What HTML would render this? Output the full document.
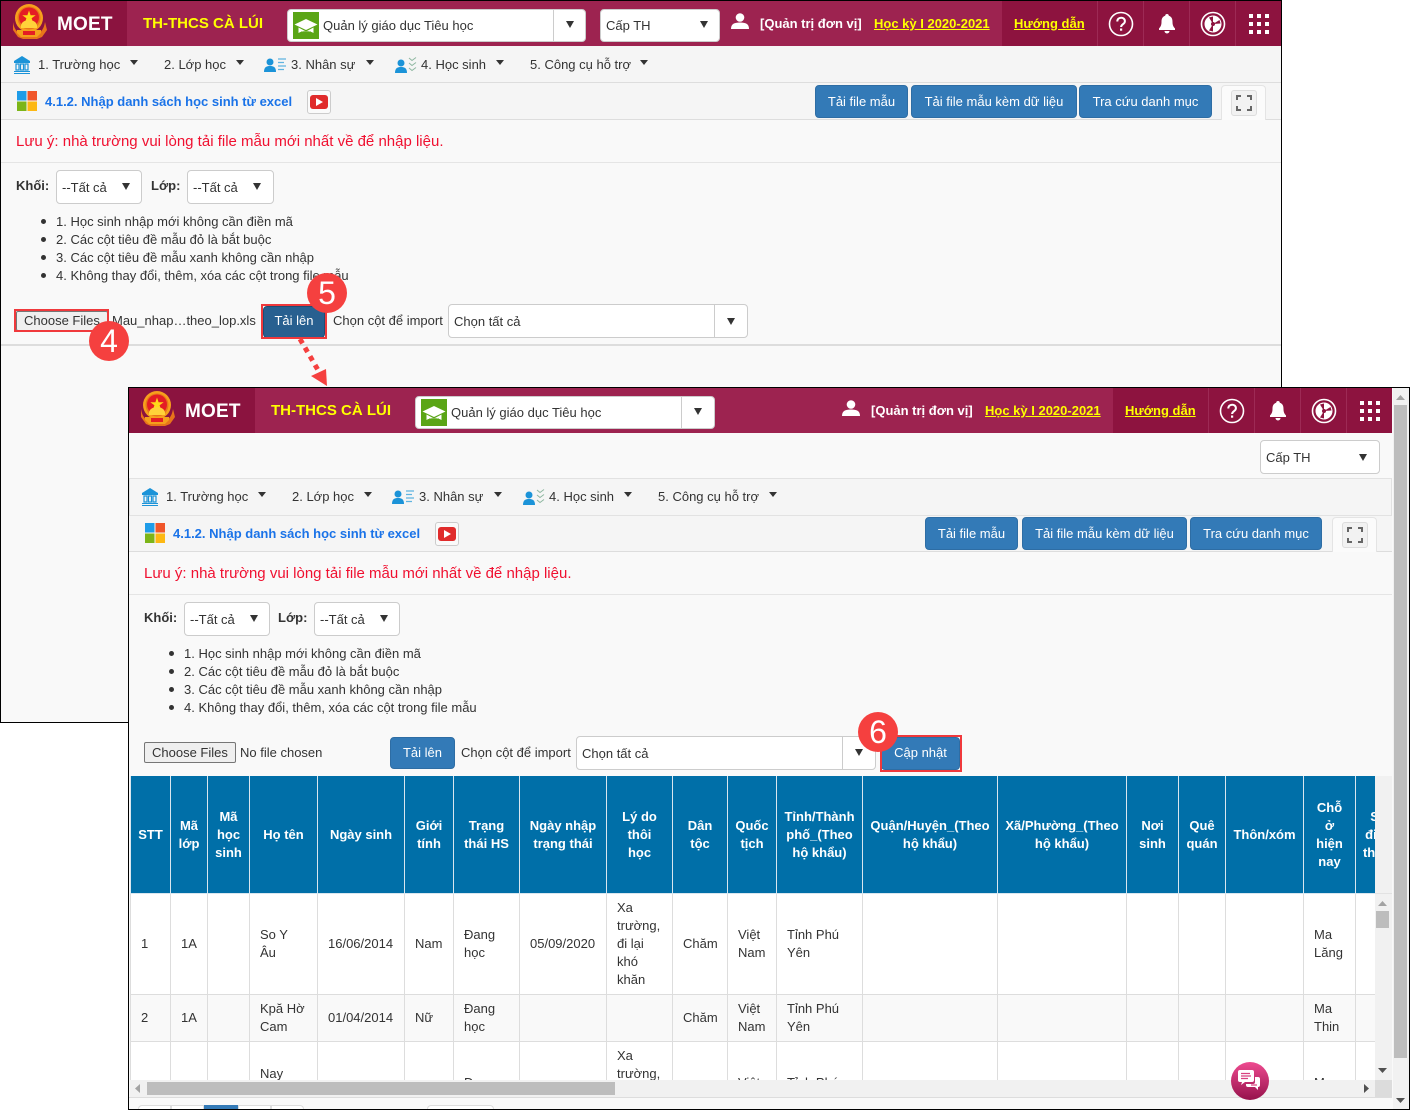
<!DOCTYPE html>
<html lang="vi"><head><meta charset="utf-8"><title>MOET</title>
<style>
html,body{margin:0;padding:0;background:#fff;overflow:hidden;width:1410px;height:1110px}
#r{width:1410px;height:1110px;position:relative;overflow:hidden;font:13px/18px "Liberation Sans",sans-serif;color:#333}
.a,.t,.sel,.btn,.car{position:absolute;box-sizing:border-box}
.t{white-space:nowrap;margin-top:1px}
.sel{background:#fff;border:1px solid #ccc;border-radius:4px}
.btn{background:#337ab7;color:#fff;border-radius:4px;text-align:center;white-space:nowrap;border:1px solid #2e6da4}
.car{width:0;height:0;border-left:4px solid transparent;border-right:4px solid transparent;border-top:5px solid #333}
.arr{border-left-width:4px;border-right-width:4px;border-top:7px solid #333}
.y{color:#ff0;font-weight:bold;text-decoration:underline}
.w{color:#fff;font-weight:bold}
.blue{color:#1a73e8;font-weight:bold}
.red{color:#f01030;font-size:15px}
.b{font-weight:bold}
.num{position:absolute;width:40px;height:40px;border-radius:50%;background:#f5403f;color:#fff;font-size:32px;line-height:40px;text-align:center}
table{border-collapse:collapse;table-layout:fixed;position:absolute;left:0;top:0}
th{background:#006fa8;color:#fff;font-size:13px;line-height:18px;border:1px solid #d8e6ef;border-top:0;padding:0;text-align:center;vertical-align:middle;white-space:nowrap;overflow:hidden;height:117px}
td{border:1px solid #ddd;padding:0 0 0 10px;line-height:18px;vertical-align:middle;white-space:nowrap;overflow:hidden;color:#333;font-size:13px}
tr.z td{background:#f9f9f9}
svg{position:absolute;overflow:visible}
</style></head><body><div id="r">
<svg width="0" height="0" style="position:absolute">
<defs>
<symbol id="em" viewBox="0 0 36 36">
<circle cx="18" cy="14" r="14" fill="#f7a01c"/><circle cx="18" cy="14" r="11.500" fill="#e8751a"/><circle cx="18" cy="13.500" r="10" fill="#e41d24"/>
<polygon points="18,6.500 19.600,11.300 24.700,11.300 20.600,14.300 22.200,19.200 18,16.200 13.800,19.200 15.400,14.300 11.300,11.300 16.400,11.300" fill="#ffd91a"/>
<path d="M10 22a8 6 0 0 1 16 0v2H10z" fill="#ffd23a"/>
<path d="M2 18c1 6 3 9 6 11h20c3-2 5-5 6-11l2 8-5 7-5 2H12l-5-2-5-7z" fill="#e8751a"/>
<path d="M6 26h24v3l-4 4H10l-4-4z" fill="#f4a01c"/><rect x="12" y="27" width="12" height="4" fill="#e41d24"/>
</symbol>
<symbol id="gr" viewBox="0 0 26 27"><rect width="26" height="27" fill="#5aa516"/><path d="M13 7L1.500 12.500 13 18l11.500-5.500z" fill="#fff"/><path d="M5.500 15.500v5.500c4-2.500 11-2.500 15 0v-5.500L13 19.500z" fill="#fff"/><path d="M8 19.500h10v1.500H8z" fill="#5aa516"/></symbol>
<symbol id="bank" viewBox="0 0 16 18"><path d="M8 0L0 5v2h16V5z" fill="#1b93d8"/><path d="M2 8h3v6H2zM6.500 8h3v6h-3zM11 8h3v6h-3z" fill="none" stroke="#1b93d8" stroke-width="1.200"/><path d="M0 15h16v1H0zM0 17h16v1H0z" fill="#1b93d8"/></symbol>
<symbol id="pl" viewBox="0 0 22 14"><circle cx="6" cy="4" r="3.500" fill="#1b93d8"/><path d="M0 14c0-5 2.500-6 6-6s6 1 6 6z" fill="#1b93d8"/><path d="M14 1h8M14 4.500h6M14 8h8M14 11.500h6" stroke="#5fb4e0" stroke-width="1.200"/></symbol>
<symbol id="pc" viewBox="0 0 22 16"><circle cx="6" cy="6" r="3.500" fill="#1b93d8"/><path d="M0 16c0-5 2.500-6 6-6s6 1 6 6z" fill="#1b93d8"/><path d="M14 1l3 2.500 4-3M14 6l3 2.500 4-3M14 11l3 2.500 4-3" fill="none" stroke="#8db7a0" stroke-width="1"/></symbol>
<symbol id="qm" viewBox="0 0 26 26"><circle cx="13" cy="13" r="11.500" fill="none" stroke="#fff" stroke-width="1.600"/><path d="M9.300 10.500c0-5 7.600-5 7.600-.300 0 3-3.800 3-3.800 5.800" fill="none" stroke="#fff" stroke-width="2"/><rect x="12" y="17.500" width="2.200" height="2.200" fill="#fff"/></symbol>
<symbol id="bell" viewBox="0 0 20 20"><path d="M10 0a1.800 1.800 0 0 1 1.800 1.800c3 .9 3.700 3.400 3.700 6.200 0 3.500 1.200 5 2.500 6.500V16H2v-1.500C3.300 13 4.500 11.500 4.500 8c0-2.800.7-5.300 3.700-6.200A1.800 1.800 0 0 1 10 0zM7.500 17h5a2.500 2.500 0 0 1-5 0z" fill="#fff"/></symbol>
<symbol id="whl" viewBox="0 0 26 26"><circle cx="13" cy="13" r="11.500" fill="none" stroke="#fff" stroke-width="1.600"/><circle cx="13" cy="13" r="8.500" fill="#fff"/><path d="M13 13V5.500L9 6.500zM13 13l7.500-.5-1-3.500zM13 13l-4 6.500 4 1z" fill="#8d133f"/><circle cx="13" cy="13" r="2" fill="#8d133f"/></symbol>
<symbol id="gd" viewBox="0 0 20 20"><path d="M0 0h4v4H0zM8 0h4v4H8zM16 0h4v4h-4zM0 8h4v4H0zM8 8h4v4H8zM16 8h4v4h-4zM0 16h4v4H0zM8 16h4v4H8zM16 16h4v4h-4z" fill="#fff"/></symbol>
<symbol id="usr" viewBox="0 0 18 16"><circle cx="9" cy="4.500" r="4.300" fill="#fff"/><path d="M0 16c0-5 3-6.500 9-6.500s9 1.500 9 6.500z" fill="#fff"/></symbol>
<symbol id="win" viewBox="0 0 20 20"><rect width="9.500" height="9.500" fill="#1e9ce8"/><rect x="10.500" width="9.500" height="9.500" fill="#f0562a"/><rect y="10.500" width="9.500" height="9.500" fill="#7cb518"/><rect x="10.500" y="10.500" width="9.500" height="9.500" fill="#fdb813"/></symbol>
<symbol id="fs" viewBox="0 0 16 16"><path d="M1 5V1h4M11 1h4v4M15 11v4h-4M5 15H1v-4" fill="none" stroke="#666" stroke-width="2"/></symbol>
</defs></svg>

<!-- WINDOW 1 -->
<div class="a" style="left:0;top:0;width:1282px;height:723px;background:#f9f9f9;border:1px solid #000"></div>
<div class="a" style="left:1px;top:1px;width:1280px;height:45px;background:#9d2350"></div>
<div class="a" style="left:1px;top:1px;width:126px;height:45px;background:#8b133f"></div>
<div class="a" style="left:1002px;top:1px;width:279px;height:45px;background:#8d133f"></div>
<div class="a" style="left:1097px;top:1px;width:1px;height:45px;background:#9d2a55"></div><div class="a" style="left:1143px;top:1px;width:1px;height:45px;background:#9d2a55"></div><div class="a" style="left:1189px;top:1px;width:1px;height:45px;background:#9d2a55"></div><div class="a" style="left:1235px;top:1px;width:1px;height:45px;background:#9d2a55"></div>
<svg style="left:11px;top:4px" width="36" height="36"><use href="#em"/></svg>
<div class="t w" style="left:57px;top:13px;font-size:19px;line-height:22px;letter-spacing:.2px">MOET</div>
<div class="t b" style="left:143px;top:14px;font-size:15px;color:#ff0">TH-THCS CÀ LÚI</div>
<div class="sel" style="left:287px;top:9px;width:299px;height:33px"></div><div class="a" style="left:553px;top:9px;width:1px;height:33px;background:#ccc"></div>
<svg style="left:293px;top:12px" width="26" height="27"><use href="#gr"/></svg>
<div class="t" style="left:323px;top:16px">Quản lý giáo dục Tiêu học</div><div class="car arr" style="left:566px;top:21px"></div>
<div class="sel" style="left:600px;top:9px;width:120px;height:33px"></div><div class="t" style="left:606px;top:16px">Cấp TH</div><div class="car arr" style="left:700px;top:21px"></div>
<svg style="left:731px;top:13px" width="18" height="16"><use href="#usr"/></svg>
<div class="t w" style="left:760px;top:14px">[Quản trị đơn vị]</div>
<div class="t y" style="left:874px;top:14px">Học kỳ I 2020-2021</div>
<div class="t y" style="left:1014px;top:14px">Hướng dẫn</div>
<svg style="left:1108px;top:11px" width="26" height="26"><use href="#qm"/></svg>
<svg style="left:1157px;top:14px" width="20" height="20"><use href="#bell"/></svg>
<svg style="left:1200px;top:11px" width="26" height="26"><use href="#whl"/></svg>
<svg style="left:1249px;top:14px" width="20" height="20"><use href="#gd"/></svg>

<div class="a" style="left:1px;top:46px;width:1280px;height:37px;background:#f5f5f5;border-bottom:1px solid #ddd"></div>
<svg style="left:14px;top:56px" width="16" height="18"><use href="#bank"/></svg>
<div class="t" style="left:38px;top:55px">1. Trường học</div><div class="car" style="left:130px;top:60px"></div>
<div class="t" style="left:164px;top:55px">2. Lớp học</div><div class="car" style="left:236px;top:60px"></div>
<svg style="left:264px;top:58px" width="22" height="14"><use href="#pl"/></svg>
<div class="t" style="left:291px;top:55px">3. Nhân sự</div><div class="car" style="left:366px;top:60px"></div>
<svg style="left:395px;top:57px" width="22" height="16"><use href="#pc"/></svg>
<div class="t" style="left:421px;top:55px">4. Học sinh</div><div class="car" style="left:496px;top:60px"></div>
<div class="t" style="left:530px;top:55px">5. Công cụ hỗ trợ</div><div class="car" style="left:640px;top:60px"></div>
<div class="a" style="left:1px;top:83px;width:1280px;height:37px;background:#f5f5f5;border-bottom:1px solid #ddd"></div>
<svg style="left:17px;top:91px" width="20" height="20"><use href="#win"/></svg>
<div class="t blue" style="left:45px;top:92px">4.1.2. Nhập danh sách học sinh từ excel</div>
<div class="a" style="left:307px;top:90px;width:24px;height:24px;background:#fafafa;border:1px solid #ccc;border-radius:3px"></div>
<div class="a" style="left:310px;top:95px;width:18px;height:14px;background:#e02b2b;border-radius:3px"></div>
<svg style="left:316px;top:98px" width="7" height="8"><path d="M0 0l7 4-7 4z" fill="#fff"/></svg>
<div class="btn" style="left:815px;top:85px;width:93px;height:33px;line-height:31px">Tải file mẫu</div>
<div class="btn" style="left:911px;top:85px;width:166px;height:33px;line-height:31px">Tải file mẫu kèm dữ liệu</div>
<div class="btn" style="left:1079px;top:85px;width:133px;height:33px;line-height:31px">Tra cứu danh mục</div>
<div class="a" style="left:1221px;top:85px;width:45px;height:35px;background:#fbfbfb;border:1px solid #e4e4e4;border-bottom:0;border-radius:4px 4px 0 0"></div>
<div class="a" style="left:1231px;top:90px;width:26px;height:26px;background:#f2f2f2;border:1px solid #ddd;border-radius:3px"></div>
<svg style="left:1236px;top:95px" width="16" height="16"><use href="#fs"/></svg>
<div class="t red" style="left:16px;top:132px">Lưu ý: nhà trường vui lòng tải file mẫu mới nhất về để nhập liệu.</div>
<div class="a" style="left:1px;top:162px;width:1280px;height:1px;background:#e5e5e5"></div>
<div class="t b" style="left:16px;top:176px">Khối:</div>
<div class="sel" style="left:56px;top:170px;width:86px;height:34px"></div><div class="t" style="left:62px;top:178px">--Tất cả</div><div class="car arr" style="left:122px;top:183px"></div>
<div class="t b" style="left:151px;top:176px">Lớp:</div>
<div class="sel" style="left:187px;top:170px;width:87px;height:34px"></div><div class="t" style="left:193px;top:178px">--Tất cả</div><div class="car arr" style="left:253px;top:183px"></div>
<div class="a" style="left:41px;top:219px;width:5px;height:5px;border-radius:50%;background:#333"></div><div class="t" style="left:56px;top:212px">1. Học sinh nhập mới không cần điền mã</div>
<div class="a" style="left:41px;top:237px;width:5px;height:5px;border-radius:50%;background:#333"></div><div class="t" style="left:56px;top:230px">2. Các cột tiêu đề mẫu đỏ là bắt buộc</div>
<div class="a" style="left:41px;top:255px;width:5px;height:5px;border-radius:50%;background:#333"></div><div class="t" style="left:56px;top:248px">3. Các cột tiêu đề mẫu xanh không cần nhập</div>
<div class="a" style="left:41px;top:273px;width:5px;height:5px;border-radius:50%;background:#333"></div><div class="t" style="left:56px;top:266px">4. Không thay đổi, thêm, xóa các cột trong file mẫu</div>
<div class="a" style="left:16px;top:311px;width:92px;height:20px;background:#efefef;border:1px solid #767676;border-radius:2px"></div>
<div class="t" style="left:24px;top:311px">Choose Files</div>
<div class="a" style="left:14px;top:309px;width:95px;height:23px;border:2px solid #f0393c"></div>
<div class="t" style="left:112px;top:311px">Mau_nhap…theo_lop.xls</div>
<div class="btn" style="left:263px;top:306px;width:62px;height:32px;line-height:28px;background:#286090;border-color:#204d74">Tải lên</div>
<div class="a" style="left:261px;top:304px;width:66px;height:35px;border:2px solid #f0393c"></div>
<div class="t" style="left:333px;top:311px">Chọn cột để import</div>
<div class="sel" style="left:448px;top:304px;width:300px;height:34px"></div><div class="a" style="left:714px;top:304px;width:1px;height:34px;background:#ccc"></div>
<div class="t" style="left:454px;top:312px">Chọn tất cả</div><div class="car arr" style="left:727px;top:318px"></div>
<div class="a" style="left:1px;top:344px;width:1280px;height:2px;background:#ddd"></div>

<!-- ARROW -->
<svg style="left:0;top:0" width="400" height="400">
<path d="M300 339L318 370" stroke="#f5403f" stroke-width="5" stroke-dasharray="5 5" fill="none"/>
<path d="M326 369L327 386 311 376z" fill="#f5403f"/></svg>
<div class="num" style="left:89px;top:321px">4</div>
<div class="num" style="left:307px;top:273px">5</div>

<!-- WINDOW 2 -->
<div class="a" style="left:128px;top:387px;width:1282px;height:723px;background:#f9f9f9;border:1px solid #000"></div>
<div class="a" style="left:129px;top:388px;width:1263px;height:45px;background:#9d2350"></div>
<div class="a" style="left:129px;top:388px;width:126px;height:45px;background:#8b133f"></div>
<div class="a" style="left:1113px;top:388px;width:279px;height:45px;background:#8d133f"></div>
<div class="a" style="left:1208px;top:388px;width:1px;height:45px;background:#9d2a55"></div><div class="a" style="left:1254px;top:388px;width:1px;height:45px;background:#9d2a55"></div><div class="a" style="left:1300px;top:388px;width:1px;height:45px;background:#9d2a55"></div><div class="a" style="left:1346px;top:388px;width:1px;height:45px;background:#9d2a55"></div>
<svg style="left:139px;top:391px" width="36" height="36"><use href="#em"/></svg>
<div class="t w" style="left:185px;top:400px;font-size:19px;line-height:22px;letter-spacing:.2px">MOET</div>
<div class="t b" style="left:271px;top:401px;font-size:15px;color:#ff0">TH-THCS CÀ LÚI</div>
<div class="sel" style="left:415px;top:396px;width:300px;height:33px"></div><div class="a" style="left:681px;top:396px;width:1px;height:33px;background:#ccc"></div>
<svg style="left:421px;top:399px" width="26" height="27"><use href="#gr"/></svg>
<div class="t" style="left:451px;top:403px">Quản lý giáo dục Tiêu học</div><div class="car arr" style="left:694px;top:408px"></div>
<svg style="left:842px;top:400px" width="18" height="16"><use href="#usr"/></svg>
<div class="t w" style="left:871px;top:401px">[Quản trị đơn vị]</div>
<div class="t y" style="left:985px;top:401px">Học kỳ I 2020-2021</div>
<div class="t y" style="left:1125px;top:401px">Hướng dẫn</div>
<svg style="left:1219px;top:398px" width="26" height="26"><use href="#qm"/></svg>
<svg style="left:1268px;top:401px" width="20" height="20"><use href="#bell"/></svg>
<svg style="left:1311px;top:398px" width="26" height="26"><use href="#whl"/></svg>
<svg style="left:1360px;top:401px" width="20" height="20"><use href="#gd"/></svg>

<div class="sel" style="left:1260px;top:440px;width:120px;height:34px"></div><div class="t" style="left:1266px;top:448px">Cấp TH</div><div class="car arr" style="left:1359px;top:454px"></div>
<div class="a" style="left:129px;top:478px;width:1263px;height:38px;background:#f5f5f5;border:1px solid #e2e2e2"></div>
<svg style="left:142px;top:488px" width="16" height="18"><use href="#bank"/></svg>
<div class="t" style="left:166px;top:487px">1. Trường học</div><div class="car" style="left:258px;top:492px"></div>
<div class="t" style="left:292px;top:487px">2. Lớp học</div><div class="car" style="left:364px;top:492px"></div>
<svg style="left:392px;top:490px" width="22" height="14"><use href="#pl"/></svg>
<div class="t" style="left:419px;top:487px">3. Nhân sự</div><div class="car" style="left:494px;top:492px"></div>
<svg style="left:523px;top:489px" width="22" height="16"><use href="#pc"/></svg>
<div class="t" style="left:549px;top:487px">4. Học sinh</div><div class="car" style="left:624px;top:492px"></div>
<div class="t" style="left:658px;top:487px">5. Công cụ hỗ trợ</div><div class="car" style="left:769px;top:492px"></div>
<div class="a" style="left:129px;top:516px;width:1263px;height:36px;background:#f5f5f5;border-bottom:1px solid #ddd"></div>
<svg style="left:145px;top:523px" width="20" height="20"><use href="#win"/></svg>
<div class="t blue" style="left:173px;top:524px">4.1.2. Nhập danh sách học sinh từ excel</div>
<div class="a" style="left:435px;top:522px;width:24px;height:24px;background:#fafafa;border:1px solid #ccc;border-radius:3px"></div>
<div class="a" style="left:438px;top:527px;width:18px;height:14px;background:#e02b2b;border-radius:3px"></div>
<svg style="left:444px;top:530px" width="7" height="8"><path d="M0 0l7 4-7 4z" fill="#fff"/></svg>
<div class="btn" style="left:925px;top:517px;width:93px;height:33px;line-height:31px">Tải file mẫu</div>
<div class="btn" style="left:1022px;top:517px;width:165px;height:33px;line-height:31px">Tải file mẫu kèm dữ liệu</div>
<div class="btn" style="left:1190px;top:517px;width:132px;height:33px;line-height:31px">Tra cứu danh mục</div>
<div class="a" style="left:1332px;top:517px;width:45px;height:35px;background:#fbfbfb;border:1px solid #e4e4e4;border-bottom:0;border-radius:4px 4px 0 0"></div>
<div class="a" style="left:1342px;top:522px;width:26px;height:26px;background:#f2f2f2;border:1px solid #ddd;border-radius:3px"></div>
<svg style="left:1347px;top:527px" width="16" height="16"><use href="#fs"/></svg>
<div class="t red" style="left:144px;top:564px">Lưu ý: nhà trường vui lòng tải file mẫu mới nhất về để nhập liệu.</div>
<div class="a" style="left:129px;top:594px;width:1263px;height:1px;background:#e5e5e5"></div>
<div class="t b" style="left:144px;top:608px">Khối:</div>
<div class="sel" style="left:184px;top:602px;width:86px;height:34px"></div><div class="t" style="left:190px;top:610px">--Tất cả</div><div class="car arr" style="left:250px;top:615px"></div>
<div class="t b" style="left:278px;top:608px">Lớp:</div>
<div class="sel" style="left:314px;top:602px;width:86px;height:34px"></div><div class="t" style="left:320px;top:610px">--Tất cả</div><div class="car arr" style="left:380px;top:615px"></div>
<div class="a" style="left:169px;top:651px;width:5px;height:5px;border-radius:50%;background:#333"></div><div class="t" style="left:184px;top:644px">1. Học sinh nhập mới không cần điền mã</div>
<div class="a" style="left:169px;top:669px;width:5px;height:5px;border-radius:50%;background:#333"></div><div class="t" style="left:184px;top:662px">2. Các cột tiêu đề mẫu đỏ là bắt buộc</div>
<div class="a" style="left:169px;top:687px;width:5px;height:5px;border-radius:50%;background:#333"></div><div class="t" style="left:184px;top:680px">3. Các cột tiêu đề mẫu xanh không cần nhập</div>
<div class="a" style="left:169px;top:705px;width:5px;height:5px;border-radius:50%;background:#333"></div><div class="t" style="left:184px;top:698px">4. Không thay đổi, thêm, xóa các cột trong file mẫu</div>
<div class="a" style="left:144px;top:742px;width:92px;height:21px;background:#efefef;border:1px solid #767676;border-radius:2px"></div>
<div class="t" style="left:152px;top:743px">Choose Files</div>
<div class="t" style="left:240px;top:743px">No file chosen</div>
<div class="btn" style="left:390px;top:737px;width:65px;height:32px;line-height:29px">Tải lên</div>
<div class="t" style="left:461px;top:743px">Chọn cột để import</div>
<div class="sel" style="left:576px;top:736px;width:300px;height:34px"></div><div class="a" style="left:842px;top:736px;width:1px;height:34px;background:#ccc"></div>
<div class="t" style="left:582px;top:744px">Chọn tất cả</div><div class="car arr" style="left:855px;top:749px"></div>
<div class="btn" style="left:881px;top:737px;width:79px;height:33px;line-height:29px">Cập nhật</div>
<div class="a" style="left:880px;top:735px;width:82px;height:37px;border:2px solid #f0393c"></div>
<div class="num" style="left:858px;top:712px">6</div>

<!-- TABLE -->
<div class="a" style="left:130px;top:776px;width:1245px;height:304px;overflow:hidden;background:#fff">
<table style="width:1271px">
<colgroup><col style="width:40px"><col style="width:37px"><col style="width:42px"><col style="width:68px"><col style="width:87px"><col style="width:49px"><col style="width:66px"><col style="width:87px"><col style="width:66px"><col style="width:55px"><col style="width:49px"><col style="width:86px"><col style="width:135px"><col style="width:129px"><col style="width:52px"><col style="width:47px"><col style="width:78px"><col style="width:52px"><col style="width:46px"></colgroup>
<tr><th>STT</th><th>Mã<br>lớp</th><th>Mã<br>học<br>sinh</th><th>Họ tên</th><th>Ngày sinh</th><th>Giới<br>tính</th><th>Trạng<br>thái HS</th><th>Ngày nhập<br>trạng thái</th><th>Lý do<br>thôi<br>học</th><th>Dân<br>tộc</th><th>Quốc<br>tịch</th><th>Tỉnh/Thành<br>phố_(Theo<br>hộ khẩu)</th><th>Quận/Huyện_(Theo<br>hộ khẩu)</th><th>Xã/Phường_(Theo<br>hộ khẩu)</th><th>Nơi<br>sinh</th><th>Quê<br>quán</th><th>Thôn/xóm</th><th>Chỗ<br>ở<br>hiện<br>nay</th><th>Số<br>điện<br>thoại</th></tr>
<tr style="height:101px"><td>1</td><td>1A</td><td></td><td>So Y<br>Âu</td><td>16/06/2014</td><td>Nam</td><td>Đang<br>học</td><td>05/09/2020</td><td>Xa<br>trường,<br>đi lại<br>khó<br>khăn</td><td>Chăm</td><td>Việt<br>Nam</td><td>Tỉnh Phú<br>Yên</td><td></td><td></td><td></td><td></td><td></td><td>Ma<br>Lăng</td><td></td></tr>
<tr class="z" style="height:47px"><td>2</td><td>1A</td><td></td><td>Kpă Hờ<br>Cam</td><td>01/04/2014</td><td>Nữ</td><td>Đang<br>học</td><td></td><td></td><td>Chăm</td><td>Việt<br>Nam</td><td>Tỉnh Phú<br>Yên</td><td></td><td></td><td></td><td></td><td></td><td>Ma<br>Thin</td><td></td></tr>
<tr style="height:101px"><td>3</td><td>1A</td><td></td><td>Nay<br>H'<br>Nhi</td><td>20/02/2014</td><td>Nữ</td><td>Đang<br>học</td><td>05/09/2020</td><td>Xa<br>trường,<br>đi lại<br>khó<br>khăn</td><td>Chăm</td><td>Việt<br>Nam</td><td>Tỉnh Phú<br>Yên</td><td></td><td></td><td></td><td></td><td></td><td>Ma<br>Lăng</td><td></td></tr>
</table></div>

<!-- inner scrollbars -->
<div class="a" style="left:1375px;top:776px;width:17px;height:304px;background:#f1f1f1"></div>
<div class="a" style="left:1375px;top:893px;width:17px;height:1px;background:#e2e2e2"></div>
<svg style="left:1378px;top:901px" width="9" height="5"><path d="M0 5l4.500-5 4.500 5z" fill="#a3a3a3"/></svg>
<div class="a" style="left:1376px;top:911px;width:13px;height:17px;background:#bdbdbd"></div>
<svg style="left:1378px;top:1068px" width="10" height="6"><path d="M0 0h9l-4.500 5z" fill="#505050"/></svg>
<div class="a" style="left:130px;top:1080px;width:1245px;height:17px;background:#f1f1f1"></div>
<div class="a" style="left:1375px;top:1080px;width:17px;height:17px;background:#dcdcdc"></div>
<svg style="left:135px;top:1084px" width="6" height="10"><path d="M5 0v9L0 4.500z" fill="#a3a3a3"/></svg>
<div class="a" style="left:147px;top:1082px;width:468px;height:13px;background:#bdbdbd"></div>
<svg style="left:1364px;top:1084px" width="6" height="10"><path d="M0 0v9l5-4.500z" fill="#505050"/></svg>
<div class="a" style="left:129px;top:1097px;width:1263px;height:1px;background:#ddd"></div>

<!-- pagination -->
<div class="a" style="left:138px;top:1105px;width:33px;height:4px;background:#fff;border:1px solid #ddd;border-bottom:0;border-radius:4px 0 0 0"></div>
<div class="a" style="left:171px;top:1105px;width:33px;height:4px;background:#fff;border:1px solid #ddd;border-bottom:0"></div>
<div class="a" style="left:204px;top:1105px;width:34px;height:4px;background:#337ab7"></div>
<div class="a" style="left:238px;top:1105px;width:33px;height:4px;background:#fff;border:1px solid #ddd;border-bottom:0"></div>
<div class="a" style="left:271px;top:1105px;width:33px;height:4px;background:#fff;border:1px solid #ddd;border-bottom:0;border-radius:0 4px 0 0"></div>
<div class="a" style="left:427px;top:1105px;width:67px;height:4px;background:#fff;border:1px solid #ddd;border-bottom:0;border-radius:4px 4px 0 0"></div>

<!-- outer scrollbar -->
<div class="a" style="left:1393px;top:388px;width:16px;height:721px;background:#f1f1f1"></div>
<svg style="left:1396px;top:395px" width="10" height="6"><path d="M0 5l4.500-5 4.500 5z" fill="#a3a3a3"/></svg>
<div class="a" style="left:1394px;top:405px;width:13px;height:653px;background:#bdbdbd"></div>
<svg style="left:1396px;top:1098px" width="10" height="6"><path d="M0 0h9l-4.500 5z" fill="#505050"/></svg>

<!-- chat -->
<div class="a" style="left:1231px;top:1062px;width:38px;height:38px;border-radius:50%;background:linear-gradient(#ee4b90,#96124c)"></div>
<svg style="left:1238px;top:1070px" width="26" height="24"><path d="M2 0h12a2 2 0 0 1 2 2v8a2 2 0 0 1-2 2H7l-4 3 1-3H2a2 2 0 0 1-2-2V2a2 2 0 0 1 2-2z" fill="#fff"/><path d="M3 3.500h9M3 6h10M3 8.500h7" stroke="#d8427f" stroke-width="1.200"/><path d="M17 7h3a2 2 0 0 1 2 2v6a2 2 0 0 1-2 2v3l-3-3H10a2 2 0 0 1-2-2v-1h7a2 2 0 0 0 2-2z" fill="#fff"/><path d="M13 15h6" stroke="#d8427f" stroke-width="1.200"/></svg>
<div class="a" style="left:128px;top:1109px;width:1282px;height:1px;background:#000"></div>
</div></body></html>
